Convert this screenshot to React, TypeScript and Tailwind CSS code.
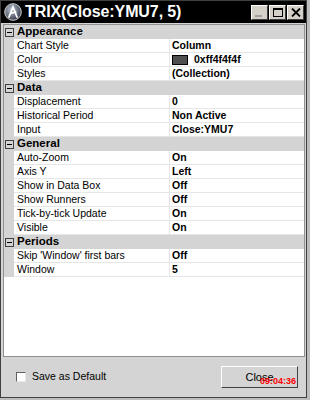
import React from 'react';

type Row = { name: string; value: string; swatch?: string };
type Section = { title: string; rows: Row[] };

const sections: Section[] = [
  {
    title: 'Appearance',
    rows: [
      { name: 'Chart Style', value: 'Column' },
      { name: 'Color', value: '0xff4f4f4f', swatch: '#4f4f4f' },
      { name: 'Styles', value: '(Collection)' },
    ],
  },
  {
    title: 'Data',
    rows: [
      { name: 'Displacement', value: '0' },
      { name: 'Historical Period', value: 'Non Active' },
      { name: 'Input', value: 'Close:YMU7' },
    ],
  },
  {
    title: 'General',
    rows: [
      { name: 'Auto-Zoom', value: 'On' },
      { name: 'Axis Y', value: 'Left' },
      { name: 'Show in Data Box', value: 'Off' },
      { name: 'Show Runners', value: 'Off' },
      { name: 'Tick-by-tick Update', value: 'On' },
      { name: 'Visible', value: 'On' },
    ],
  },
  {
    title: 'Periods',
    rows: [
      { name: "Skip 'Window' first bars", value: 'Off' },
      { name: 'Window', value: '5' },
    ],
  },
];

function CaptionButton({ children }: { children: React.ReactNode }) {
  return (
    <div className="w-[17px] h-[15px] bg-[#d4d0c8] border-t border-l border-t-white border-l-white border-b border-r border-b-[#404040] border-r-[#404040] flex items-center justify-center">
      {children}
    </div>
  );
}

function TitleBar() {
  return (
    <div className="h-[22px] bg-black flex items-center pl-[3px] pr-[2px] shrink-0">
      <svg width="18" height="18" viewBox="0 0 18 18" className="shrink-0">
        <defs>
          <radialGradient id="g" cx="40%" cy="35%" r="65%">
            <stop offset="0%" stopColor="#b8c0d0" />
            <stop offset="100%" stopColor="#3a4050" />
          </radialGradient>
        </defs>
        <circle cx="9" cy="9" r="8.3" fill="url(#g)" stroke="#d0d0d0" strokeWidth="1" />
        <path d="M5 14 L9 4 L13 14 M6.8 10.5 L11.6 9" stroke="#fff" strokeWidth="1.8" fill="none" strokeLinecap="round" />
      </svg>
      <span className="ml-[3px] text-white font-bold text-[16px] leading-none font-['Liberation_Sans',Arial,sans-serif] tracking-[-0.1px]">
        TRIX(Close:YMU7, 5)
      </span>
      <div className="ml-auto flex gap-[1px]">
        <CaptionButton>
          <div className="w-[7px] h-[2px] bg-[#a0a0a0] mt-[8px] -ml-[2px]" />
        </CaptionButton>
        <CaptionButton>
          <div className="w-[10px] h-[9px] border border-black border-t-2" />
        </CaptionButton>
        <CaptionButton>
          <svg width="10" height="9" viewBox="0 0 10 9">
            <path d="M1 0.5 L9 8.5 M9 0.5 L1 8.5" stroke="#000" strokeWidth="1.8" />
          </svg>
        </CaptionButton>
      </div>
    </div>
  );
}

function MinusBox() {
  return (
    <div className="w-[9px] h-[9px] border border-[#404040] bg-[#d4d4d4] flex items-center justify-center">
      <div className="w-[5px] h-[1px] bg-black" />
    </div>
  );
}

function Grid() {
  return (
    <div className="flex-1 bg-white border border-[#909090] overflow-hidden text-[10.5px] leading-none font-['Liberation_Sans',Arial,sans-serif] text-black">
      {sections.map((s) => (
        <div key={s.title}>
          <div className="h-[14px] bg-[#d4d4d4] flex items-center">
            <div className="w-[10px] flex justify-center shrink-0">
              <MinusBox />
            </div>
            <span className="pl-[3px] font-bold text-[11.5px]">{s.title}</span>
          </div>
          {s.rows.map((r) => (
            <div key={r.name} className="h-[14px] flex">
              <div className="w-[10px] bg-[#d4d4d4] shrink-0" />
              <div className="w-[156px] shrink-0 pl-[3px] flex items-center border-b border-[#e6e6e6] border-r border-r-[#e6e6e6]">
                {r.name}
              </div>
              <div className="flex-1 pl-[2px] flex items-center font-bold border-b border-[#e6e6e6]">
                {r.swatch && (
                  <div className="w-[16px] h-[10px] border border-black mr-[6px]" style={{ background: r.swatch }} />
                )}
                {r.value}
              </div>
            </div>
          ))}
        </div>
      ))}
    </div>
  );
}

export default function App() {
  return (
    <div className="w-[310px] h-[400px] bg-[#bdbdbd] overflow-hidden">
      <div className="w-[307px] h-[398px] bg-[#d4d4d4] border border-[#404040] flex flex-col">
        <TitleBar />
        <div className="flex-1 flex flex-col pl-[2px] pr-[1px] pt-[1px]">
          <Grid />
          <div className="h-[40px] shrink-0 flex items-center pl-[13px] pr-[7px] font-['Liberation_Sans',Arial,sans-serif]">
            <div className="w-[10px] h-[10px] bg-white border-t border-l border-t-[#606060] border-l-[#606060] border-b border-r border-b-[#e8e8e8] border-r-[#e8e8e8]" />
            <span className="ml-[6px] text-[10.5px] text-black">Save as Default</span>
            <div className="ml-auto relative w-[77px] h-[22px] bg-[#d4d4d4] border-t border-l border-t-white border-l-white border-b border-r border-b-[#404040] border-r-[#404040] flex items-center justify-center">
              <span className="text-[11px] text-black">Close</span>
              <span className="absolute right-[1px] bottom-[1px] text-[9px] leading-none font-bold text-[#ff0000]">
                09:04:36
              </span>
            </div>
          </div>
        </div>
      </div>
    </div>
  );
}
